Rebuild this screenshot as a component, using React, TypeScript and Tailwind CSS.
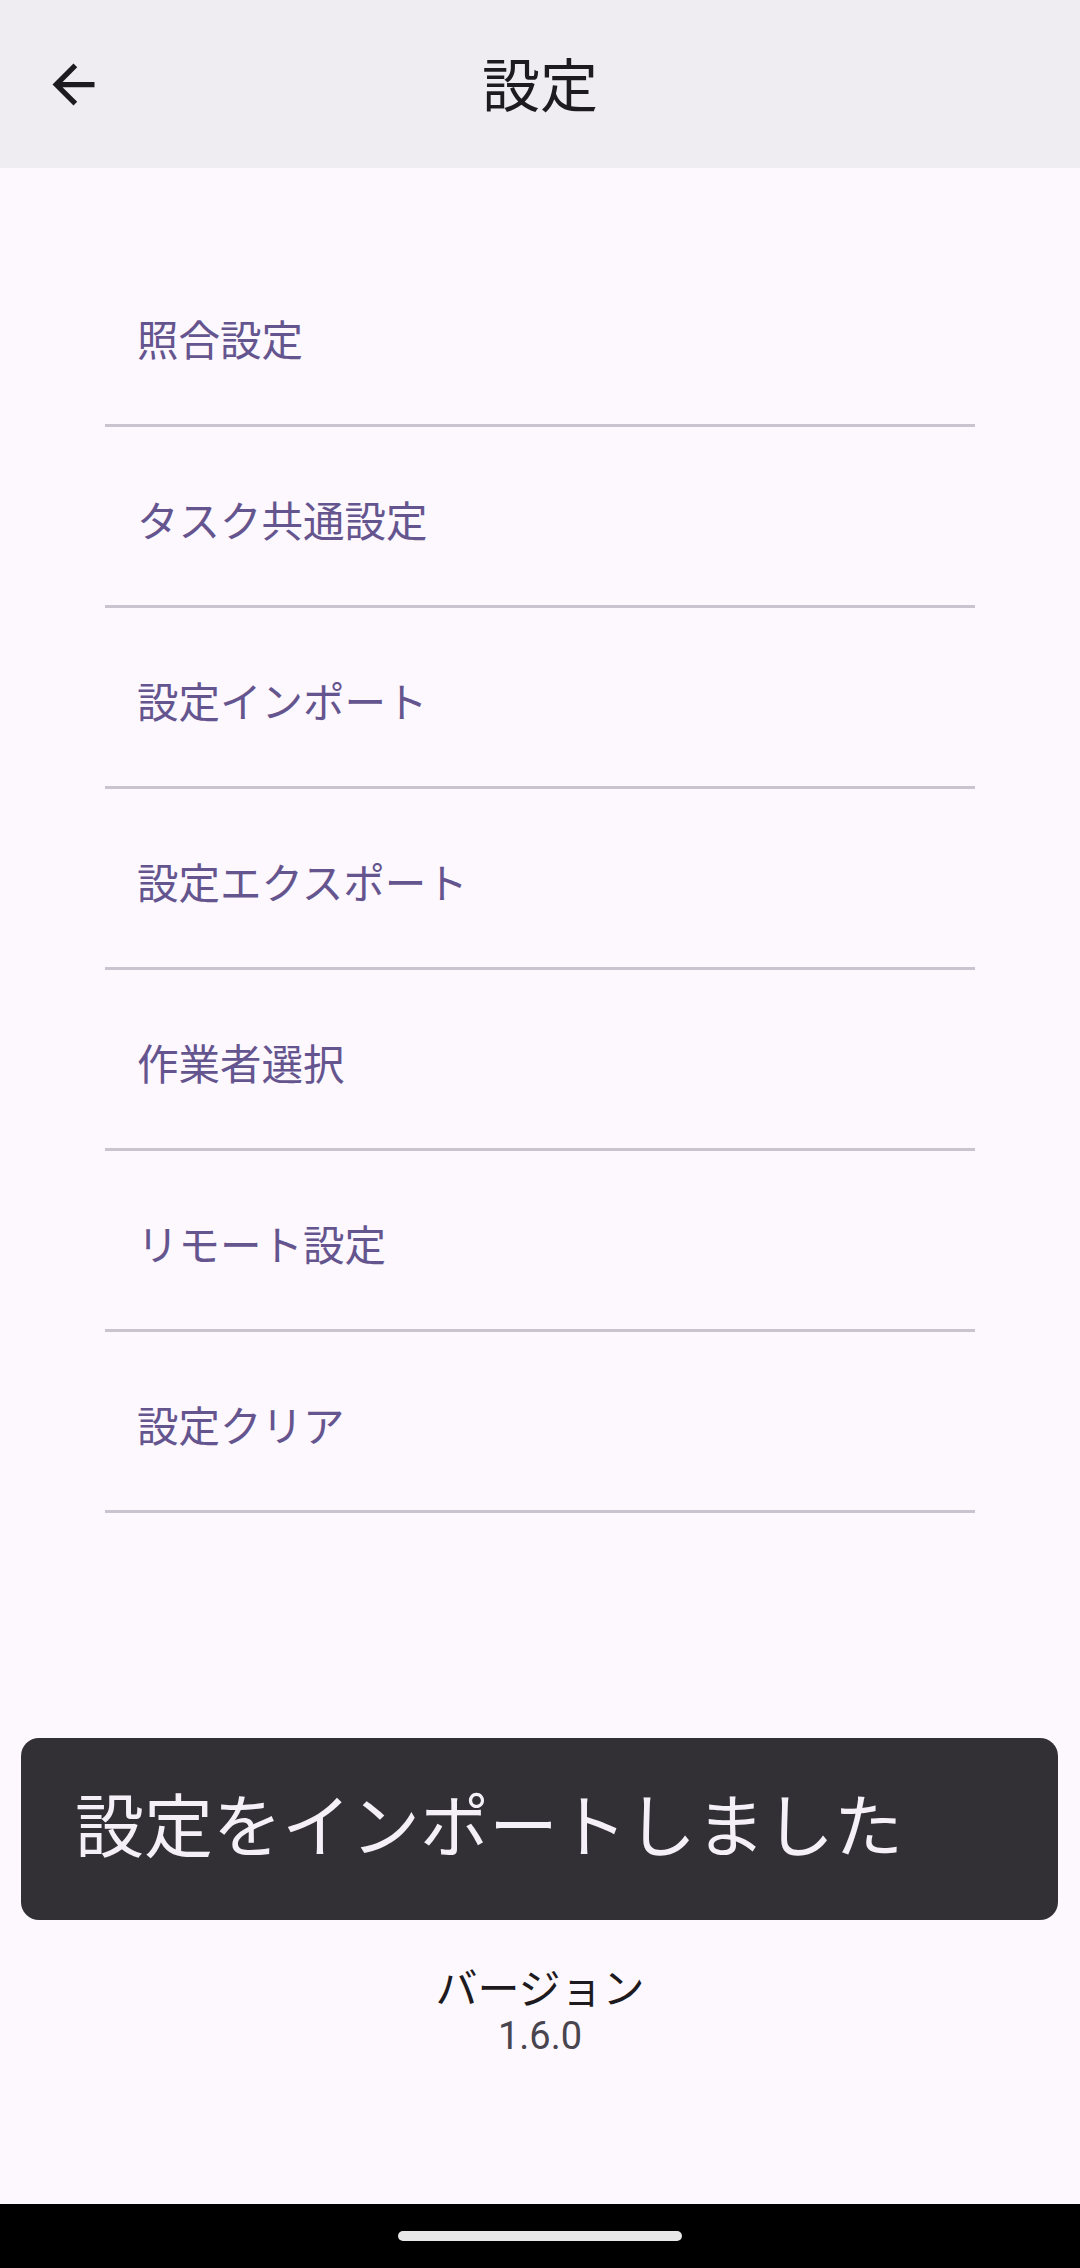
import React from 'react';

const items = [
  '照合設定',
  'タスク共通設定',
  '設定インポート',
  '設定エクスポート',
  '作業者選択',
  'リモート設定',
  '設定クリア',
];

const font = { fontFamily: 'Roboto, "Noto Sans CJK JP", sans-serif' };

const App: React.FC = () => {
  return (
    <div className="relative flex h-[2268px] w-[1080px] flex-col bg-[#fdf7fe]" style={font}>
      {/* ヘッダー */}
      <header className="grid h-[168px] shrink-0 grid-cols-[105px_1fr_105px] items-center bg-[#f0edf2]">
        <button className="flex h-[63px] w-[63px] items-center justify-center ml-[42px]" aria-label="戻る">
          <svg viewBox="0 0 24 24" className="h-[63px] w-[63px]" fill="#1d1b20">
            <path d="M20 11H7.83l5.59-5.59L12 4l-8 8 8 8 1.41-1.41L7.83 13H20v-2z" />
          </svg>
        </button>
        <h1 className="pt-[6px] text-center text-[58px] leading-[68px] text-[#1d1b20]">設定</h1>
        <div />
      </header>

      {/* 設定リスト */}
      <main className="flex flex-1 flex-col">
        <ul className="mx-[105px] mt-[78px]">
          {items.map((label) => (
            <li
              key={label}
              className="flex h-[181px] items-center border-b-[3px] border-[#cac4d0] pl-[32px] pt-[14px] text-[41.5px] leading-[50px] text-[#65558f]"
            >
              {label}
            </li>
          ))}
        </ul>

        <div className="flex-1" />

        {/* バージョン */}
        <div className="flex flex-col items-center pb-[146px]">
          <span className="text-[42px] leading-[48px] text-[#1d1b20]">バージョン</span>
          <span className="text-[38px] leading-[44px] text-[#49454f]">1.6.0</span>
        </div>
      </main>

      {/* ナビゲーションバー */}
      <div className="flex h-[64px] shrink-0 items-center justify-center bg-black">
        <div className="h-[10px] w-[284px] rounded-full bg-[#e8e8e8]" />
      </div>

      {/* トースト */}
      <div className="absolute left-[21px] right-[22px] top-[1738px] flex h-[182px] items-center rounded-[18px] bg-[#322f35] pl-[54px]">
        <span className="text-[69px] leading-[80px] text-[#f5eff7]">設定をインポートしました</span>
      </div>
    </div>
  );
};

export default App;
